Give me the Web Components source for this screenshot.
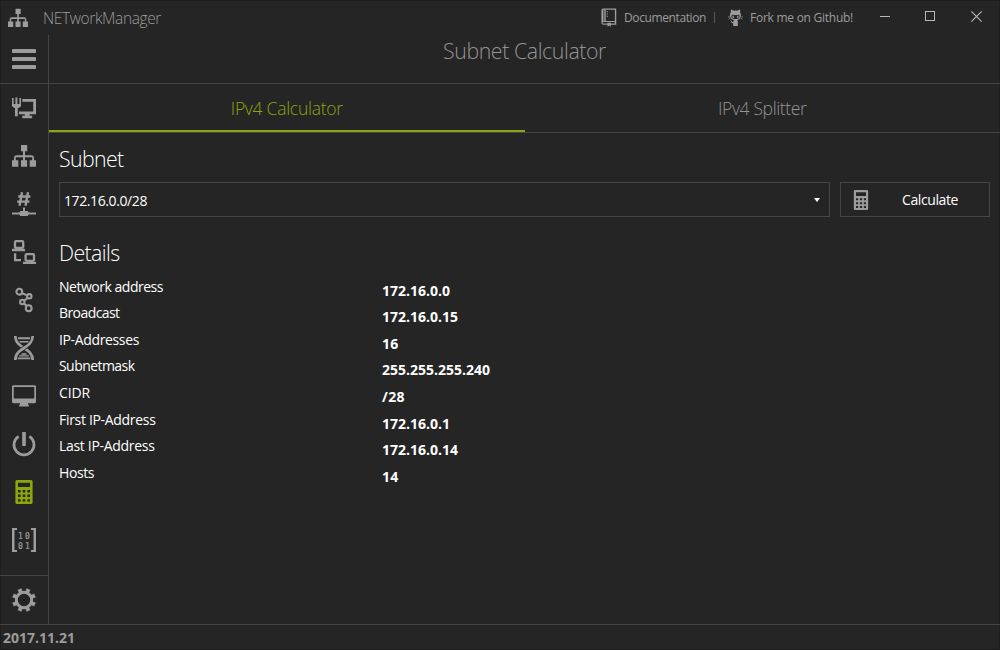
<!DOCTYPE html>
<html lang="en">
<head>
<meta charset="utf-8">
<title>NETworkManager</title>
<style>
html,body{margin:0;height:100%;background:#252525;overflow:hidden}
body{font-family:"Open Sans","Noto Sans",sans-serif;color:#fff;font-size:14px}
</style>
</head>
<body>
<nm-window></nm-window>
<script>
const define = (name, html, ready) => customElements.define(name, class extends HTMLElement {
  connectedCallback() {
    if (this.shadowRoot) return;
    const t = document.createElement('template');
    t.innerHTML = typeof html === 'function' ? html(this) : html;
    this.attachShadow({mode: 'open'}).appendChild(t.content.cloneNode(true));
    if (ready) ready(this);
  }
});

/* A single line of text, tracked so that it takes the width given in pixels. */
define('fit-text', '<style>:host{display:inline-block;white-space:nowrap;line-height:1}span{display:inline-block}</style><span><slot></slot></span>', el => {
  const w = parseFloat(el.getAttribute('width'));
  const s = el.shadowRoot.querySelector('span');
  const n = el.textContent.length;
  s.style.letterSpacing = ((w - s.getBoundingClientRect().width) / n) + 'px';
});

const calc = '<path fill-rule="evenodd" d="M5 0h14a1.6 1.6 0 0 1 1.6 1.6v20.8a1.6 1.6 0 0 1-1.6 1.6H5a1.6 1.6 0 0 1-1.6-1.6V1.6A1.6 1.6 0 0 1 5 0zM6 2.8v4.3h12V2.8zM6 10v2.4h2.6V10zM10.7 10v2.4h2.6V10zM15.4 10v2.4H18V10zM6 14.6v2.4h2.6v-2.4zM10.7 14.6v2.4h2.6v-2.4zM15.4 14.6v2.4H18v-2.4zM6 19.3v2.3h2.6v-2.3zM10.7 19.3v2.3h2.6v-2.3zM15.4 19.3v2.3H18v-2.3z"/>';
const sitemap = '<path d="M9 1h6.2v6.2h-2.2v4h6.5a2.5 2.5 0 0 1 2.5 2.5v2.6h2v6.4h-6.3v-6.4h2.5V13.3H13v3h2.1v6.4H9v-6.4h2v-3H3.8v3h2.5v6.4H0v-6.4h2v-2.6a2.5 2.5 0 0 1 2.5-2.5H11v-4H9z"/>';
let gear = '';
for (let i = 0; i < 8; i++) gear += `<path d="M9.9 0.2h4.2l-.3 4.5h-3.6z" transform="rotate(${22.5 + i * 45} 12 12)"/>`;
const icons = {
  menu: '<rect y="2" width="24" height="4" rx=".8"/><rect y="10" width="24" height="4" rx=".8"/><rect y="18" width="24" height="4" rx=".8"/>',
  netif: '<path d="M0 2h1.6v6h1.8V1.6h2V8h2V2H9v8.3L6.6 12H5.8v8.2H3V12H2.4L0 10.3z"/><path d="M10.3 3H24v15.2H7v-2.6h14.2V5.7H10.3z"/><path d="M12.8 18h4.8v1.8h2.6v2.4h-10v-2.4h2.6z"/>',
  sitemap,
  ip: '<g fill="none" stroke="currentColor" stroke-width="2.4"><path d="M10 .2L7.5 13.8M16 .2l-2.5 13.6M6.2 4.5h12.2M5.2 9.6h12.2"/></g><path d="M11 15.4h2v3.6h2.7l1.1 1.4H24v2.2h-7.3l-1.1 1.4H8.4l-1.2-1.4H0v-2.2h7.2L8.400 19H11z"/>',
  remote: '<g fill="none" stroke="currentColor" stroke-width="2.3"><rect x="3" y="1.100" width="8.2" height="6.8" rx="1"/><rect x="13.6" y="14.2" width="8.4" height="6.6" rx="1"/><path d="M3.1 13.2v6.9H9"/></g><path d="M0 8.8h13v2.4H0zM11 21.700h13v2.300H11z"/>',
  trace: '<g fill="none" stroke="currentColor" stroke-width="2.1"><circle cx="7.3" cy="3.7" r="2.9"/><circle cx="17.3" cy="8.3" r="2.2"/><circle cx="10.3" cy="14" r="2.2"/><circle cx="16.7" cy="20.2" r="2.9"/><path d="M10 5.2l5.2 2.2M15.6 9.9l-3.5 2.8M12 15.6l2.7 2.3"/></g>',
  dna: '<g fill="none" stroke="currentColor" stroke-width="2.7"><path d="M3.3 0C3.3 13 20.7 11 20.7 24"/><path d="M20.7 0C20.7 13 3.3 11 3.3 24" stroke="#252525" stroke-width="4.4"/><path d="M20.7 0C20.7 13 3.3 11 3.3 24"/></g><path d="M6 1.3h12v1.9H6zM7.5 4.9h9v1.7h-9zM9.5 17.2h5v1.6h-5zM7 19.2h10v1.2H7zM5.7 21.5h12.6v1.7H5.7z"/>',
  monitor: '<path fill-rule="evenodd" d="M1.4 1.3h21.2A1.4 1.4 0 0 1 24 2.7v15.1a1.4 1.4 0 0 1-1.4 1.4H16v1.6h1.2l-.6 1.8H7.4l-.6-1.8H8v-1.6H1.4A1.4 1.4 0 0 1 0 17.8V2.7a1.4 1.4 0 0 1 1.4-1.4zM1.7 3v11.4h20.6V3z"/>',
  power: '<path d="M6.600 4.400A10 10 0 1 0 17.400 4.400" fill="none" stroke="currentColor" stroke-width="2.7"/><rect x="10.2" width="3.6" height="14"/>',
  calc,
  bits: '<path d="M0 0h5v2H2.5v20H5v2H0zM24 0h-5v2h2.5v20H19v2h5z"/><g font-family="DejaVu Sans Mono,monospace" font-size="8" stroke="currentColor" stroke-width=".2"><text x="6 13" y="10.600">10</text><text x="6 13" y="20.6">01</text></g>',
  gear: gear + '<circle cx="12" cy="12" r="7.7" fill="none" stroke="currentColor" stroke-width="3"/>',
  book: '<path fill-rule="evenodd" d="M3 .7h17v23H13v3l-2.2-1.8L8.500 26.700v-3H3.200A2.800 2.800 0 0 1 .5 21V3.200A2.500 2.500 0 0 1 3 .7zM6.200 2.600v16h12v-16zM3.300 2.600v16h1V2.600zM3 20a1 1 0 0 0 0 2h5.500v-1h4.500v1h5.200v-2z"/><path d="M7.500 4.500h1.700v1.500H7.500zM7.500 7.700h1.700v1.500H7.500zM7.500 10.900h1.700v1.500H7.500z"/>',
  cat: '<path fill-rule="evenodd" d="M5 .6c1.600.1 3 .9 4.200 1.900 1.800-.4 3.800-.4 5.600 0C16 1.500 17.400.7 19 .6c.7 1.500.8 3 .3 4.500 1.300 1.600 1.600 3.500 1.200 5.500-.7 3.200-3 4.500-6 4.900 1.300 1 1.200 2 1.200 3.300v5.200H8.300v-4h-.5c-1.700 0-2.200-1-2.800-2.100-.4-.8-.9-1.200-1.600-1.500 1.500-.5 2.500.2 3.200 1.200.7.900 1 1 2 .7.100-1.200.3-2 1.100-2.800-3.100-.4-5.600-1.700-6.500-4.900-.5-2-.1-3.900 1.200-5.500C4.500 3.600 4.300 2.100 5 .6zM7.500 8C5 8 4.900 12 6.800 13.200c2.400 1.300 8 1.300 10.400 0C19.100 12 19 8 16.500 8c-1.600 0-2.700.4-4.500.4S9.100 8 7.500 8z"/><ellipse cx="8.400" cy="10.900" rx="1.200" ry="1.700"/><ellipse cx="15.600" cy="10.900" rx="1.200" ry="1.700"/><path d="M0 10.500l3.500.5v.7L0 11.500zM.5 14l3.200-1.200.3.700-3 1.300zM24 10.500l-3.500.5v.7l3.500-.2zM23.500 14l-3.200-1.200-.3.700 3 1.300z"/>',
  min: '<path d="M0 5h10v1H0z"/>',
  max: '<path fill-rule="evenodd" d="M0 0h10v10H0zM1 1v8h8V1z"/>',
  close: '<path d="M.3.300l10.400 10.400M10.700.300L.3 10.700" stroke="currentColor" stroke-width="1.100"/>',
  drop: '<path d="M0 0h6L3 4z"/>'
};
define('nm-icon', el => {
  const w = el.getAttribute('w') || 24, h = el.getAttribute('h') || 24;
  const vb = el.getAttribute('box') || '0 0 24 24';
  return `<style>:host{display:block;flex:none}svg{display:block;overflow:visible}</style><svg width="${w}" height="${h}" viewBox="${vb}" preserveAspectRatio="none" fill="currentColor">${icons[el.getAttribute('name')]}</svg>`;
});

define('nm-caption', `<style>
:host{display:flex;height:35px;color:#9c9c9c;align-items:flex-start}
.row{display:flex;align-items:center}
.app{padding:9px 0 0 8px;height:19px;gap:15px;font-size:15.5px;font-weight:300}
.app nm-icon{margin-top:-1px}
.links{margin-left:auto;padding-top:8px;height:19px;font-size:12px}
.sep{width:1px;height:11px;background:#555;margin:0 13px 0 8px}
.win{padding:11px 18px 0 27px;color:#b8b8b8;align-items:flex-start}
nm-icon.cat{margin-right:7px} nm-icon.book{margin-right:7px}
.mx{margin:0 36px 0 35px}
</style>
<div class="row app"><nm-icon name="sitemap" w="20" h="20"></nm-icon><fit-text width="118">NETworkManager</fit-text></div>
<div class="row links"><nm-icon class="book" name="book" w="16" h="19" box="0 0 21 27"></nm-icon><fit-text width="82">Documentation</fit-text>
<span class="sep"></span><nm-icon class="cat" name="cat" w="15" h="17"></nm-icon><fit-text width="103">Fork me on Github!</fit-text></div>
<div class="row win"><nm-icon name="min" w="10" h="10" box="0 0 10 10"></nm-icon><nm-icon class="mx" name="max" w="10" h="10" box="0 0 10 10"></nm-icon><nm-icon name="close" w="11" h="11" box="0 0 11 11"></nm-icon></div>`);

define('nm-nav-item', el => `<style>:host{display:flex;height:48px;align-items:center;justify-content:center;color:#9c9c9c}:host([active]){color:#8ca60e}</style><nm-icon name="${el.getAttribute('icon')}"></nm-icon>`);

define('nm-sidebar', `<style>
:host{display:flex;flex-direction:column;width:48px;border-right:1px solid #464646;flex:none}
.head{border-bottom:1px solid #464646;margin-right:-1px}.head nm-nav-item{margin-right:1px}
.foot{border-top:1px solid #464646;margin-top:auto}
</style>
<div class="head"><nm-nav-item icon="menu"></nm-nav-item></div>
${['netif','sitemap','ip','remote','trace','dna','monitor','power','calc','bits'].map(i => `<nm-nav-item icon="${i}"${i === 'calc' ? ' active' : ''}></nm-nav-item>`).join('')}
<div class="foot"><nm-nav-item icon="gear"></nm-nav-item></div>`);

define('nm-tab', `<style>:host{flex:1;display:flex;height:48px;align-items:center;justify-content:center;box-sizing:border-box;padding-top:2px;font-size:17.5px;font-weight:300;color:#949494}
:host([active]){color:#8ca60e;box-shadow:inset 0 -2px #8ca60e}</style><slot></slot>`);

define('nm-detail', el => `<style>:host{display:flex;height:26.6px;align-items:center}
.l{width:323px}.v{font-weight:700;padding-top:8px}</style>
<span class="l"><fit-text width="${el.getAttribute('lw')}">${el.getAttribute('label')}</fit-text></span><span class="v"><fit-text width="${el.getAttribute('vw')}">${el.getAttribute('value')}</fit-text></span>`);

define('nm-combo', `<style>:host{flex:1;display:flex;box-sizing:border-box;height:35px;border:1px solid #464646;align-items:center;justify-content:space-between;padding:2px 9px 0 4px}
nm-icon{margin-top:-2px}</style><slot></slot><nm-icon name="drop" w="6" h="4" box="0 0 6 4"></nm-icon>`);

define('nm-button', `<style>:host{display:flex;box-sizing:border-box;width:150px;height:35px;border:1px solid #464646;align-items:center;padding-left:10px}
nm-icon{color:#9c9c9c;margin-right:31px}</style><nm-icon name="calc" w="20" h="20"></nm-icon><slot></slot>`);

const rows = [['Network address',104,'172.16.0.0',68],['Broadcast',60.5,'172.16.0.15',76],['IP-Addresses',80,'16',16.5],['Subnetmask',75.5,'255.255.255.240',108],['CIDR',31,'/28',23],['First IP-Address',96.5,'172.16.0.1',68],['Last IP-Address',95.5,'172.16.0.14',76],['Hosts',35,'14',16.5]];
define('nm-content', `<style>
:host{flex:1;display:block;min-width:0}
.head{height:48px;border-bottom:1px solid #464646;text-align:center;display:flex;justify-content:center;color:#949494;font-size:21.3px;font-weight:300}
.head fit-text{margin-top:5px}
.tabs{display:flex;border-bottom:1px solid #464646}
.body{padding:0 10px}
.h{display:flex;align-items:center;box-sizing:border-box;height:49px;padding-top:3px;font-size:21.3px;font-weight:300}
.h.d{height:55.9px;padding-top:15.4px}
.form{display:flex;gap:10px}
</style>
<div class="head"><fit-text width="163">Subnet Calculator</fit-text></div>
<div class="tabs"><nm-tab active><fit-text width="112">IPv4 Calculator</fit-text></nm-tab><nm-tab><fit-text width="88.5">IPv4 Splitter</fit-text></nm-tab></div>
<div class="body">
<div class="h"><fit-text width="64.5">Subnet</fit-text></div>
<div class="form"><nm-combo><fit-text width="83">172.16.0.0/28</fit-text></nm-combo><nm-button><fit-text width="56">Calculate</fit-text></nm-button></div>
<div class="h d"><fit-text width="60.5">Details</fit-text></div>
${rows.map(r => `<nm-detail label="${r[0]}" lw="${r[1]}" value="${r[2]}" vw="${r[3]}"></nm-detail>`).join('')}
</div>`);

define('nm-status', `<style>:host{display:flex;align-items:center;height:25px;border-top:1px solid #464646;padding-left:3px;color:#9c9c9c;font-weight:700}</style><slot></slot>`);

define('nm-window', `<style>
:host{display:flex;flex-direction:column;width:1000px;height:650px;background:#252525;box-shadow:inset 0 0 0 1px #1d1d1d;overflow:hidden}
main{display:flex;height:589px}
</style>
<nm-caption></nm-caption><main><nm-sidebar></nm-sidebar><nm-content></nm-content></main><nm-status><fit-text width="72">2017.11.21</fit-text></nm-status>`);
</script>
</body>
</html>
